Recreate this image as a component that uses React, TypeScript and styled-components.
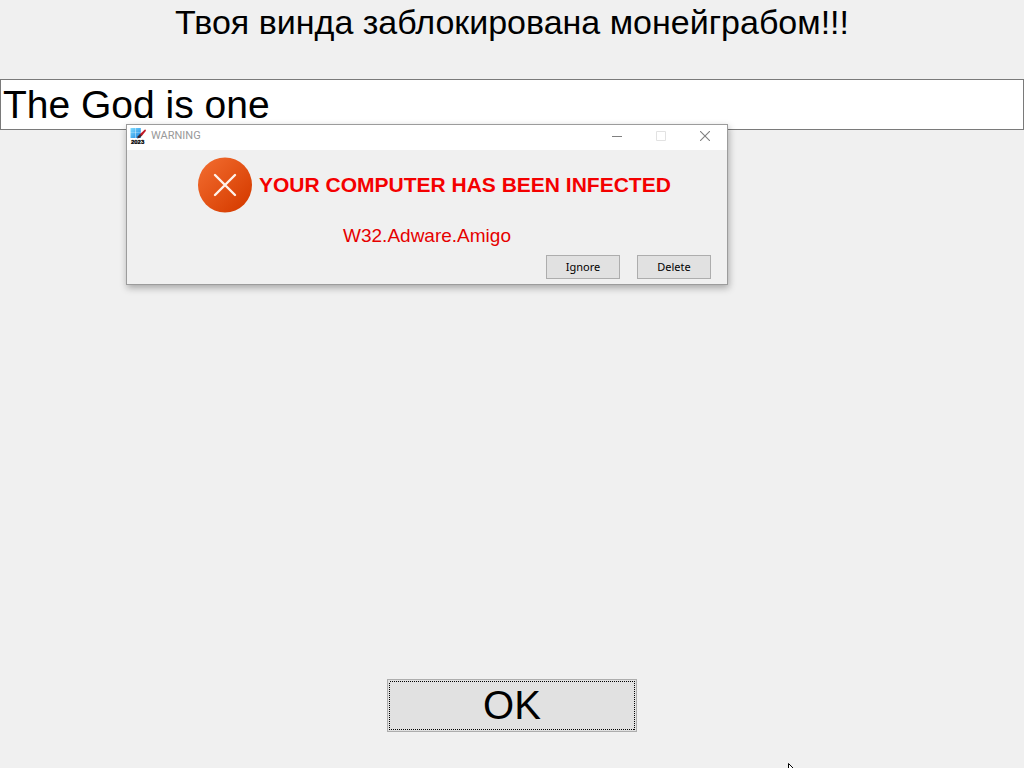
import React from "react";
import styled, { createGlobalStyle } from "styled-components";

const GlobalStyle = createGlobalStyle`
  *, *::before, *::after { box-sizing: border-box; }
  body { margin: 0; background: #f0f0f0; overflow: hidden; }
`;

const Screen = styled.main`
  position: relative;
  display: flex;
  flex-direction: column;
  min-height: 100vh;
  padding-bottom: 36px;
  background: #f0f0f0;
  color: #000;
  font-family: "Liberation Sans", Arial, sans-serif;
`;

const Heading = styled.h1`
  margin: 0 0 35px;
  font-size: 34px;
  font-weight: 400;
  line-height: 44px;
  text-align: center;
`;

const CodeInput = styled.input`
  width: 100%;
  height: 51px;
  padding: 0 2px;
  border: 1px solid #7a7a7a;
  border-radius: 0;
  outline: none;
  background: #fff;
  color: #000;
  font: 39px "Liberation Sans", Arial, sans-serif;
`;

const OkButton = styled.button`
  align-self: center;
  width: 250px;
  height: 53px;
  margin-top: auto;
  padding: 1px;
  border: 1px solid #adadad;
  background: #e1e1e1;
  color: #000;
  font: 40px "Liberation Sans", Arial, sans-serif;
`;

const FocusFrame = styled.svg`
  display: block;
  grid-area: 1 / 1;
  width: 100%;
  height: 100%;
`;

const OkFace = styled.span`
  display: grid;
  height: 100%;
`;

const OkLabel = styled.span`
  grid-area: 1 / 1;
  line-height: 49px;
`;

const Dialog = styled.section`
  position: absolute;
  top: 124px;
  left: 126px;
  width: 602px;
  border: 1px solid #9c9c9c;
  background: #f0f0f0;
  box-shadow: 1px 3px 7px rgba(0, 0, 0, 0.3);
`;

const TitleBar = styled.header`
  display: flex;
  align-items: center;
  height: 25px;
  padding-left: 3px;
  background: #fff;
`;

const AppIcon = styled.svg`
  width: 16px;
  height: 16px;
  margin: 0 5px 3px 0;
`;

const DialogTitle = styled.h2`
  flex: 1;
  margin: 0 0 3px;
  color: #999;
  font-family: Roboto, "Liberation Sans", sans-serif;
  font-size: 11px;
  font-weight: 400;
  line-height: 16px;
`;

const CaptionButton = styled.button`
  display: flex;
  align-items: center;
  justify-content: center;
  width: 44px;
  height: 24px;
  padding: 0 0 3px;
  border: 0;
  background: transparent;
  color: #808080;

  &:disabled { color: #e2e2e2; }
`;

const Alert = styled.div`
  display: flex;
  align-items: center;
  gap: 7px;
  padding: 7px 0 0 71px;
`;

const AlertText = styled.p`
  margin: 0;
  color: #f40000;
  font-size: 21px;
  font-weight: 700;
  line-height: 24px;
  white-space: nowrap;
`;

const ThreatName = styled.p`
  margin: 11px 0 7px;
  color: #e60000;
  font-size: 19px;
  line-height: 24px;
  text-align: center;
`;

const Actions = styled.div`
  display: flex;
  justify-content: flex-end;
  gap: 17px;
  padding: 0 16px 5px 0;
`;

const ActionButton = styled.button`
  width: 74px;
  height: 24px;
  padding: 0;
  border: 1px solid #adadad;
  background: #e1e1e1;
  color: #000;
  font: 11px/20px "Segoe UI", "Noto Sans", sans-serif;
`;

const Pointer = styled.svg`
  position: absolute;
  bottom: 0;
  left: 788px;
`;

export default function App() {
  return (
    <Screen>
      <GlobalStyle />
      <Heading>Твоя винда заблокирована монейграбом!!!</Heading>
      <CodeInput type="text" aria-label="Code" defaultValue="The God is one" />
      <OkButton type="button" aria-label="OK">
        <OkFace>
          <FocusFrame aria-hidden="true">
            <rect x="0.5" y="0.5" width="245" height="48" fill="none" stroke="#000" strokeDasharray="1 1" shapeRendering="crispEdges" />
          </FocusFrame>
          <OkLabel>OK</OkLabel>
        </OkFace>
      </OkButton>

      <Dialog role="alertdialog" aria-labelledby="warning-title">
        <TitleBar>
          <AppIcon viewBox="0 0 16 16" aria-hidden="true">
            <defs>
              <linearGradient id="pane" x1="0" y1="0" x2="1" y2="1">
                <stop offset="0" stopColor="#7fdcff" />
                <stop offset="1" stopColor="#1b86e0" />
              </linearGradient>
            </defs>
            <path d="M.5 0h4.9v4.7H.5zM5.8 0h5v4.7h-5zM.5 5.1h4.9v4.9H.5zM5.8 5.1h5V10h-5z" fill="url(#pane)" />
            <path d="M15.2 1.2 9.8 6.2l1.8 2L16 2.8z" fill="#c01826" />
            <path d="M10 6 7.8 8.2 7.2 10.4l2.6-.6 2-2z" fill="#40252b" />
            <text x="7.6" y="15.6" textAnchor="middle" fontFamily="Liberation Sans" fontWeight="700" fontSize="6" fill="#000" stroke="#000" strokeWidth="0.3">2023</text>
          </AppIcon>
          <DialogTitle id="warning-title">WARNING</DialogTitle>
          <CaptionButton type="button" aria-label="Minimize">
            <svg width="10" height="10"><path d="M0 5.5h10" stroke="currentColor" /></svg>
          </CaptionButton>
          <CaptionButton type="button" aria-label="Maximize" disabled>
            <svg width="10" height="10"><path d="M.5.5h9v9h-9z" fill="none" stroke="currentColor" /></svg>
          </CaptionButton>
          <CaptionButton type="button" aria-label="Close">
            <svg width="10" height="10"><path d="m0 0 10 10M10 0 0 10" stroke="currentColor" strokeWidth="1.1" /></svg>
          </CaptionButton>
        </TitleBar>
        <Alert>
          <svg width="54" height="56" viewBox="0 0 54 56" aria-hidden="true">
            <defs>
              <linearGradient id="disc" x1="0" y1="0" x2="1" y2="1">
                <stop offset="0.1" stopColor="#f0692c" />
                <stop offset="0.9" stopColor="#d63c00" />
              </linearGradient>
            </defs>
            <ellipse cx="27" cy="28" rx="27" ry="27.5" fill="url(#disc)" />
            <path d="m17 18 20 20M37 18 17 38" stroke="#fff3eb" strokeWidth="2.4" strokeLinecap="round" />
          </svg>
          <AlertText>YOUR COMPUTER HAS BEEN INFECTED</AlertText>
        </Alert>
        <ThreatName>W32.Adware.Amigo</ThreatName>
        <Actions>
          <ActionButton type="button">Ignore</ActionButton>
          <ActionButton type="button">Delete</ActionButton>
        </Actions>
      </Dialog>

      <Pointer width="6" height="5" viewBox="0 0 6 5" aria-hidden="true">
        <path d="M.5 6V.5L6 6" fill="#fff" stroke="#000" />
      </Pointer>
    </Screen>
  );
}
